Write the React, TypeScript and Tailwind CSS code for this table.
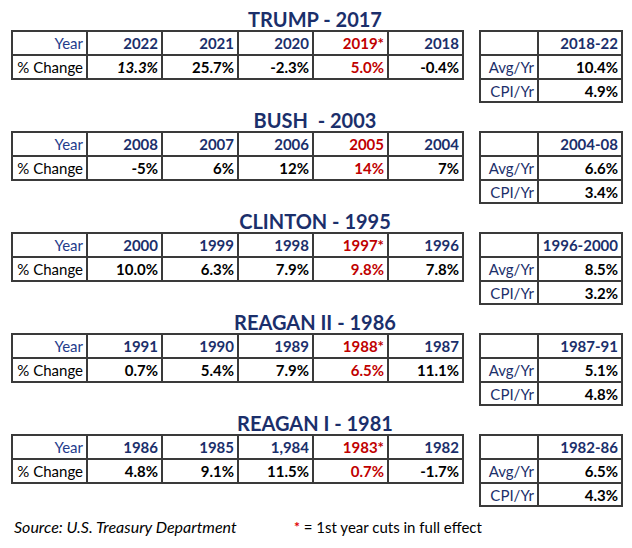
import React from 'react'

interface Section {
  title: string
  years: string[]
  changes: string[]
  red: number
  italic?: number
  range: string
  avg: string
  cpi: string
}

const sections: Section[] = [
  {
    title: 'TRUMP - 2017',
    years: ['2022', '2021', '2020', '2019*', '2018'],
    changes: ['13.3%', '25.7%', '-2.3%', '5.0%', '-0.4%'],
    red: 3,
    italic: 0,
    range: '2018-22',
    avg: '10.4%',
    cpi: '4.9%',
  },
  {
    title: 'BUSH  - 2003',
    years: ['2008', '2007', '2006', '2005', '2004'],
    changes: ['-5%', '6%', '12%', '14%', '7%'],
    red: 3,
    range: '2004-08',
    avg: '6.6%',
    cpi: '3.4%',
  },
  {
    title: 'CLINTON - 1995',
    years: ['2000', '1999', '1998', '1997*', '1996'],
    changes: ['10.0%', '6.3%', '7.9%', '9.8%', '7.8%'],
    red: 3,
    range: '1996-2000',
    avg: '8.5%',
    cpi: '3.2%',
  },
  {
    title: 'REAGAN II - 1986',
    years: ['1991', '1990', '1989', '1988*', '1987'],
    changes: ['0.7%', '5.4%', '7.9%', '6.5%', '11.1%'],
    red: 3,
    range: '1987-91',
    avg: '5.1%',
    cpi: '4.8%',
  },
  {
    title: 'REAGAN I - 1981',
    years: ['1986', '1985', '1,984', '1983*', '1982'],
    changes: ['4.8%', '9.1%', '11.5%', '0.7%', '-1.7%'],
    red: 3,
    range: '1982-86',
    avg: '6.5%',
    cpi: '4.3%',
  },
]

const cell = 'border-2 border-[#3a3a3a] px-[3px] text-right align-middle leading-[18px]'

function MainTable({ s }: { s: Section }) {
  return (
    <table className="w-[451px] table-fixed border-collapse">
      <colgroup>
        <col className="w-[75px]" />
        <col className="w-[75px]" />
        <col className="w-[76px]" />
        <col className="w-[75px]" />
        <col className="w-[75px]" />
        <col className="w-[75px]" />
      </colgroup>
      <tbody>
        <tr className="h-[24px]">
          <td className={`${cell} text-[#1f3c8c]`}>Year</td>
          {s.years.map((y, i) => (
            <td key={y} className={`${cell} font-bold ${i === s.red ? 'text-[#c00000]' : 'text-[#1b2f6b]'}`}>
              {y}
            </td>
          ))}
        </tr>
        <tr className="h-[24px]">
          <td className={`${cell} text-left text-black`}>% Change</td>
          {s.changes.map((c, i) => (
            <td
              key={i}
              className={`${cell} font-bold ${i === s.red ? 'text-[#c00000]' : 'text-black'} ${i === s.italic ? 'italic' : ''}`}
            >
              {c}
            </td>
          ))}
        </tr>
      </tbody>
    </table>
  )
}

function SideTable({ s }: { s: Section }) {
  return (
    <table className="w-[142px] table-fixed border-collapse">
      <colgroup>
        <col className="w-[58px]" />
        <col className="w-[84px]" />
      </colgroup>
      <tbody>
        <tr className="h-[24px]">
          <td className={cell}></td>
          <td className={`${cell} font-bold text-[#1b2f6b]`}>{s.range}</td>
        </tr>
        <tr className="h-[24px]">
          <td className={`${cell} text-[#1b2f6b]`}>Avg/Yr</td>
          <td className={`${cell} font-bold text-black`}>{s.avg}</td>
        </tr>
        <tr className="h-[23px]">
          <td className={`${cell} text-[#1b2f6b]`}>CPI/Yr</td>
          <td className={`${cell} font-bold text-black`}>{s.cpi}</td>
        </tr>
      </tbody>
    </table>
  )
}

export default function App() {
  return (
    <div className="w-[632px] h-[548px] bg-white pt-[8px] pl-[11px] font-['Lato',sans-serif] text-[15px]">
      <div className="flex flex-col gap-[6px]">
        {sections.map(s => (
          <div key={s.title} className="w-[608px]">
            <div className="h-[22px] text-center text-[20px] font-bold leading-[22px] whitespace-pre text-[#1b2f6b]">
              {s.title}
            </div>
            <div className="flex items-start gap-[15px]">
              <MainTable s={s} />
              <SideTable s={s} />
            </div>
          </div>
        ))}
      </div>
      <div className="mt-[8px] flex items-center text-[16px] text-black">
        <span className="w-[283px] pl-[3px] italic">Source: U.S. Treasury Department</span>
        <span className="text-[15px]">
          <span className="align-top text-[14px] font-bold text-[#e00000]">*</span> = 1st year cuts in full effect
        </span>
      </div>
    </div>
  )
}
